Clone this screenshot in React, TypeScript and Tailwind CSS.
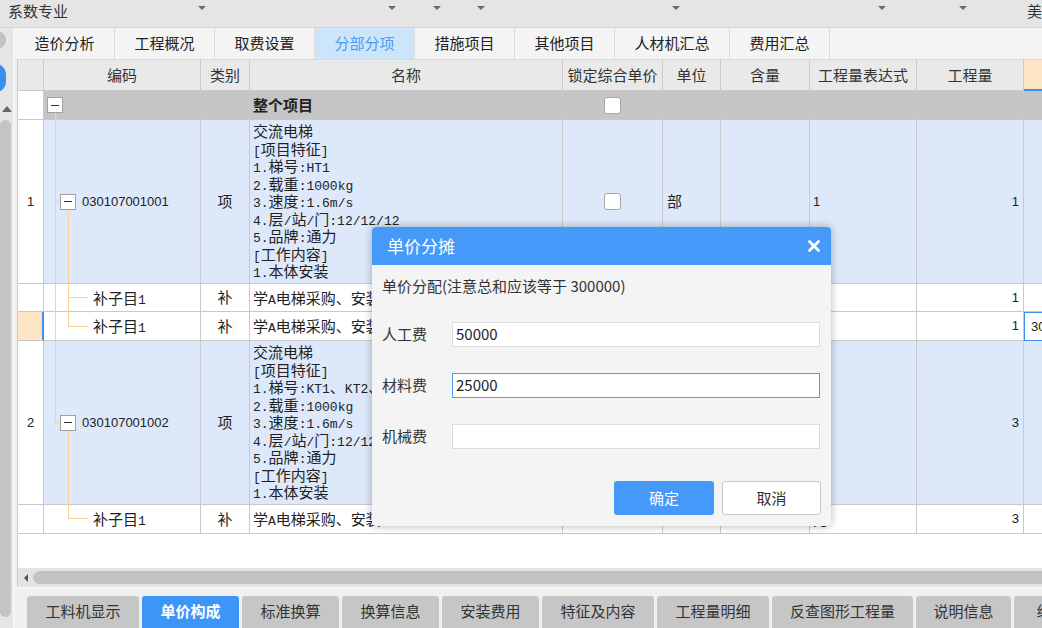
import React from 'react';

const sans = "font-['Noto_Sans_CJK_SC','Noto_Sans',sans-serif]";
const mono = "font-['Liberation_Mono','Noto_Sans_CJK_SC',monospace]";
const latin = "font-['Liberation_Sans','Noto_Sans_CJK_SC',sans-serif]";

const topCombos = [
  { w: 212, label: '系数专业' },
  { w: 192, label: '' },
  { w: 45, label: '' },
  { w: 44, label: '' },
  { w: 197, label: '' },
  { w: 208, label: '' },
  { w: 82, label: '' },
];

const topTabs = [
  { label: '造价分析', w: 100 },
  { label: '工程概况', w: 100 },
  { label: '取费设置', w: 100 },
  { label: '分部分项', w: 100, active: true },
  { label: '措施项目', w: 100 },
  { label: '其他项目', w: 100 },
  { label: '人材机汇总', w: 115 },
  { label: '费用汇总', w: 100 },
];

const bottomTabs = [
  { label: '工料机显示', w: 112 },
  { label: '单价构成', w: 97, active: true },
  { label: '标准换算', w: 97 },
  { label: '换算信息', w: 97 },
  { label: '安装费用', w: 97 },
  { label: '特征及内容', w: 112 },
  { label: '工程量明细', w: 112 },
  { label: '反查图形工程量', w: 141 },
  { label: '说明信息', w: 95 },
  { label: '组', w: 60 },
];

const headers = ['', '编码', '类别', '名称', '锁定综合单价', '单位', '含量', '工程量表达式', '工程量', ''];
const colW = ['w-[26px]', 'w-[157px]', 'w-[49px]', 'w-[313px]', 'w-[100px]', 'w-[58px]', 'w-[89px]', 'w-[107px]', 'w-[107px]', 'w-[80px]'];

const item1 = ['交流电梯', '[项目特征]', '1.梯号:HT1', '2.载重:1000kg', '3.速度:1.6m/s', '4.层/站/门:12/12/12', '5.品牌:通力', '[工作内容]', '1.本体安装'];
const item2 = ['交流电梯', '[项目特征]', '1.梯号:KT1、KT2、KT3', '2.载重:1000kg', '3.速度:1.6m/s', '4.层/站/门:12/12/12', '5.品牌:通力', '[工作内容]', '1.本体安装'];

// SimSun-like look: CJK at 15px, half-width latin at 13px mono
function Mixed({ text }: { text: string }) {
  const parts = text.split(/([\x20-\x7e]+)/).filter(Boolean);
  return (
    <div className="h-[17.5px] leading-[17.5px] whitespace-nowrap">
      {parts.map((p, i) =>
        /^[\x20-\x7e]+$/.test(p) ? (
          <span key={i} className={`${mono} text-[13px]`}>{p}</span>
        ) : (
          <span key={i} className="text-[15px]">{p}</span>
        )
      )}
    </div>
  );
}

function Caret() {
  return <span className="block w-0 h-0 border-l-[4px] border-r-[4px] border-t-[4px] border-l-transparent border-r-transparent border-t-[#6b6b6b]" />;
}

function MinusBox() {
  return (
    <span className="relative z-10 inline-flex w-[16px] h-[16px] shrink-0 items-center justify-center border border-[#a0a0a0] bg-white">
      <span className="w-[8px] h-[1px] bg-[#333]" />
    </span>
  );
}

function Check() {
  return <span className="inline-block w-[17px] h-[17px] rounded-[3px] border border-[#a8a8a8] bg-white" />;
}

function Cell({ i, className = '', children }: { i: number; className?: string; children?: React.ReactNode }) {
  return (
    <div className={`${colW[i]} shrink-0 h-full border-r border-b border-[#c9c9c9] flex items-center overflow-hidden whitespace-nowrap ${className}`}>
      {children}
    </div>
  );
}

function ItemRow({ no, code, lines, unit, expr, qty }: { no: string; code: string; lines: string[]; unit: string; expr: string; qty: string }) {
  return (
    <div className="flex h-[164px] bg-[#dde9fb]">
      <Cell i={0} className={`${latin} bg-white justify-center text-[13px]`}>{no}</Cell>
      <Cell i={1} className="pl-[16px] gap-[6px]">
        <MinusBox />
        <span className={`${latin} text-[13px] text-[#222]`}>{code}</span>
      </Cell>
      <Cell i={2} className="justify-center text-[15px]">项</Cell>
      <Cell i={3} className="pl-[3px] text-[#222] items-start pt-[2px]">
        <div className="flex flex-col">
          {lines.map((l) => (
            <Mixed key={l} text={l} />
          ))}
        </div>
      </Cell>
      <Cell i={4} className="justify-center"><Check /></Cell>
      <Cell i={5} className="pl-[4px] text-[15px]">{unit}</Cell>
      <Cell i={6} />
      <Cell i={7} className={`${latin} pl-[3px] text-[13px]`}>{expr}</Cell>
      <Cell i={8} className={`${latin} justify-end pr-[4px] text-[13px]`}>{qty}</Cell>
      <Cell i={9} />
    </div>
  );
}

function SubRow({ h, qty, selected }: { h: string; qty: string; selected?: boolean }) {
  return (
    <div className={`flex ${h} bg-white`}>
      <Cell i={0} className={selected ? 'bg-[#fde5c6] !border-r-2 !border-r-[#3d8ff0]' : ''} />
      <Cell i={1} className="pl-[49px]"><Mixed text="补子目1" /></Cell>
      <Cell i={2} className="justify-center text-[15px]">补</Cell>
      <Cell i={3} className="pl-[3px]"><Mixed text="学A电梯采购、安装" /></Cell>
      <Cell i={4} />
      <Cell i={5} />
      <Cell i={6} />
      <Cell i={7} className="pl-[3px] text-[14px]">元</Cell>
      <Cell i={8} className={`${latin} justify-end pr-[4px] text-[13px]`}>{qty}</Cell>
      <Cell i={9} className={selected ? `${latin} !border !border-[#3d8ff0] pl-[6px] text-[13px]` : ''}>{selected ? '300000' : ''}</Cell>
    </div>
  );
}

export default function App() {
  return (
    <div className={`${sans} relative w-[1042px] h-[628px] overflow-hidden bg-[#f0f0f0] text-[#222]`}>
      {/* top toolbar */}
      <div className="flex h-[28px] items-center bg-[#e5e5e5] border-b border-[#d2d2d2]">
        {topCombos.map((c, i) => (
          <div key={i} style={{ width: c.w }} className="flex h-full items-start justify-between pl-[8px] pr-[4px]">
            <span className="text-[15px] text-[#333] leading-[21px]">{c.label}</span>
            <span className="mt-[6px]"><Caret /></span>
          </div>
        ))}
        <span className="ml-[56px] self-start text-[15px] leading-[21px] text-[#333]">美</span>
      </div>

      <div className="flex h-[600px]">
        {/* left strip */}
        <div className="relative w-[15px] shrink-0 bg-[#e6e6e6] border-r-2 border-[#f6f6f6] overflow-hidden">
          <div className="absolute left-[-12px] top-[3px] w-[18px] h-[18px] rounded-full bg-[#c2c2c2]" />
          <div className="absolute left-[-14px] top-[36px] w-[20px] h-[28px] rounded-full bg-[#3b8ef0]" />
          <div className="absolute left-[2px] top-[78px] w-0 h-0 border-l-[5px] border-r-[5px] border-b-[6px] border-l-transparent border-r-transparent border-b-[#666]" />
          <div className="absolute left-0 top-[92px] w-[11px] h-[497px] rounded-[6px] bg-[#c4c4c4]" />
        </div>

        <div className="flex flex-col flex-1 min-w-0">
          {/* top tabs */}
          <div className="flex h-[32px] bg-[#f4f4f4] border-b border-[#dadada]">
            {topTabs.map((t) => (
              <div
                key={t.label}
                style={{ width: t.w }}
                className={`flex items-center justify-center border-r border-[#dcdcdc] text-[15px] ${
                  t.active ? 'bg-[#cde5fb] text-[#4b9bee]' : 'text-[#222]'
                }`}
              >
                {t.label}
              </div>
            ))}
          </div>

          {/* grid */}
          <div className="relative ml-[2px] h-[508px] bg-white border-l border-[#c9c9c9] overflow-hidden">
            <div className="flex h-[31px] bg-[#e9e9e9]">
              {headers.map((h, i) => (
                <Cell key={i} i={i} className={`justify-center text-[15px] text-[#333] ${i === 9 ? 'bg-[#fde5c6] !border-b-2 !border-b-[#3d8ff0]' : ''}`}>
                  {h}
                </Cell>
              ))}
            </div>

            <div className="flex h-[29px] bg-[#c5c5c5]">
              <Cell i={0} className="bg-white" />
              <Cell i={1} className="pl-[3px]"><MinusBox /></Cell>
              <Cell i={2} />
              <Cell i={3} className="pl-[3px] text-[15px] font-bold">整个项目</Cell>
              <Cell i={4} className="justify-center"><Check /></Cell>
              <Cell i={5} />
              <Cell i={6} />
              <Cell i={7} />
              <Cell i={8} />
              <Cell i={9} />
            </div>

            <ItemRow no="1" code="030107001001" lines={item1} unit="部" expr="1" qty="1" />
            <SubRow h="h-[28px]" qty="1" />
            <SubRow h="h-[29px]" qty="1" selected />
            <ItemRow no="2" code="030107001002" lines={item2} unit="" expr="" qty="3" />
            <SubRow h="h-[29px]" qty="3" />

            {/* tree lines */}
            <div className="absolute left-[37px] top-[51px] w-[1px] h-[312px] bg-[#fcd195]" />
            <div className="absolute left-[37px] top-[141px] w-[6px] h-[1px] bg-[#fcd195]" />
            <div className="absolute left-[37px] top-[362px] w-[6px] h-[1px] bg-[#fcd195]" />
            <div className="absolute left-[50px] top-[149px] w-[1px] h-[118px] bg-[#fcd195]" />
            <div className="absolute left-[50px] top-[237px] w-[20px] h-[1px] bg-[#fcd195]" />
            <div className="absolute left-[50px] top-[266px] w-[20px] h-[1px] bg-[#fcd195]" />
            <div className="absolute left-[50px] top-[370px] w-[1px] h-[89px] bg-[#fcd195]" />
            <div className="absolute left-[50px] top-[458px] w-[20px] h-[1px] bg-[#fcd195]" />
          </div>

          {/* horizontal scrollbar */}
          <div className="ml-[2px] flex h-[19px] items-center gap-[5px] bg-[#e4e4e4] pl-[6px] border-l border-[#c9c9c9]">
            <span className="w-0 h-0 border-t-[4px] border-b-[4px] border-r-[4px] border-t-transparent border-b-transparent border-r-[#555]" />
            <span className="flex-1 h-[13px] rounded-l-[7px] bg-[#c3c3c3]" />
          </div>

          {/* bottom tabs */}
          <div className="flex flex-1 items-end gap-[3px] pl-[12px] border-t-2 border-[#f8f8f8]">
            {bottomTabs.map((t) => (
              <div
                key={t.label}
                style={{ width: t.w }}
                className={`flex h-[32px] shrink-0 items-center justify-center rounded-t-[3px] text-[15px] leading-[20px] pb-[2px] ${
                  t.active ? 'bg-[#3d95f6] text-white font-bold' : 'bg-[#c6c6c6] text-[#333]'
                }`}
              >
                {t.label}
              </div>
            ))}
          </div>
        </div>
      </div>

      {/* dialog */}
      <div className="absolute left-[372px] top-[227px] w-[459px] h-[299px] flex flex-col rounded-[4px] bg-[#f4f4f4] shadow-[0_0_8px_rgba(0,0,0,0.3)] overflow-hidden">
        <div className="flex h-[38px] shrink-0 items-center justify-between bg-[#4499f9] pl-[15px] pr-[10px]">
          <span className="text-[17px] text-white">单价分摊</span>
          <svg width="14" height="14" viewBox="0 0 14 14">
            <path d="M2.5 2.5 L11.5 11.5 M11.5 2.5 L2.5 11.5" stroke="#fff" strokeWidth="2.8" strokeLinecap="round" />
          </svg>
        </div>
        <div className="flex flex-col px-[10px]">
          <div className="mt-[11px] h-[20px] text-[15px] leading-[20px] text-[#333]">单价分配(注意总和应该等于 300000)</div>
          {[
            { label: '人工费', value: '50000', focus: false },
            { label: '材料费', value: '25000', focus: true },
            { label: '机械费', value: '', focus: false },
          ].map((f) => (
            <div key={f.label} className="flex items-center mt-[26px]">
              <span className="w-[70px] text-[15px] text-[#333]">{f.label}</span>
              <div
                className={`flex h-[25px] w-[368px] items-center bg-white pl-[3px] text-[15px] text-[#222] border ${
                  f.focus ? 'border-[#4c9ef5]' : 'border-[#dcdcdc]'
                }`}
              >
                {f.value}
              </div>
            </div>
          ))}
          <div className="mt-[32px] flex justify-end gap-[8px]">
            <button className="flex h-[34px] w-[100px] items-center justify-center rounded-[3px] bg-[#4499f9] text-[15px] text-white">
              确定
            </button>
            <button className="flex h-[34px] w-[99px] items-center justify-center rounded-[3px] border border-[#c8c8c8] bg-white text-[15px] text-[#333]">
              取消
            </button>
          </div>
        </div>
      </div>
    </div>
  );
}
